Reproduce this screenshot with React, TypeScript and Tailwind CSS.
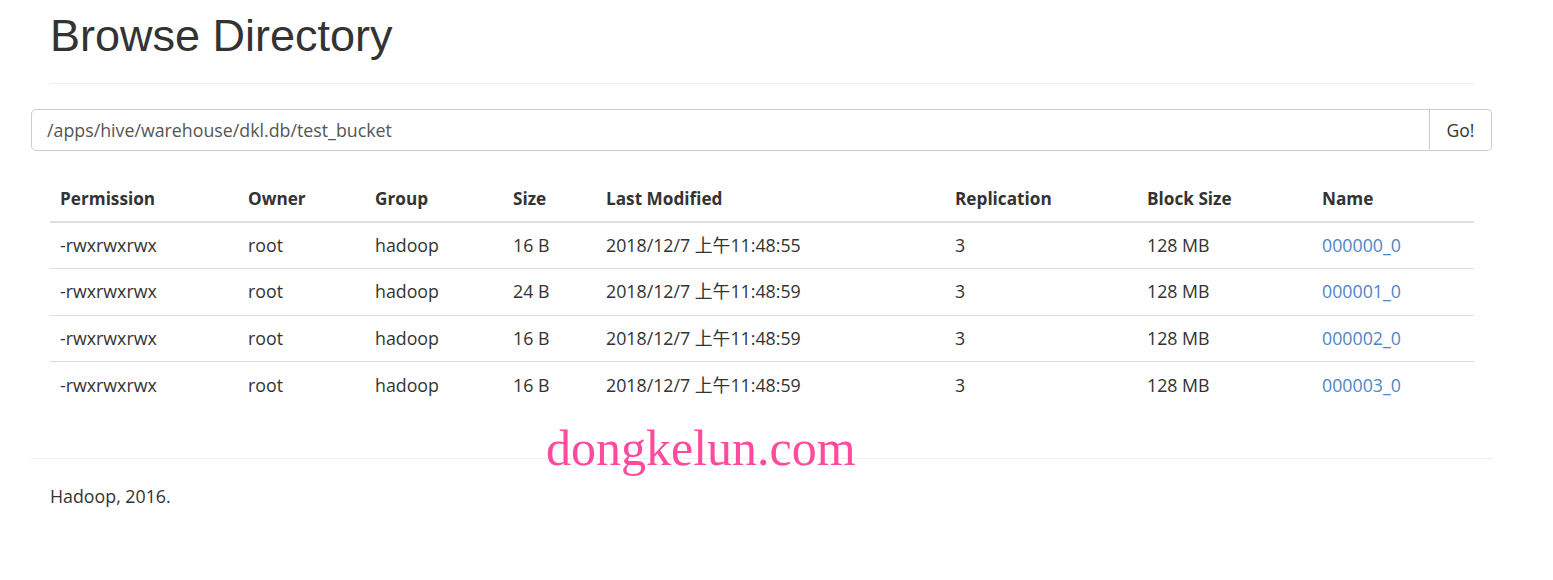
import React from "react";

const rows = [
  { perm: "-rwxrwxrwx", owner: "root", group: "hadoop", size: "16 B", mod: "2018/12/7 上午11:48:55", rep: "3", block: "128 MB", name: "000000_0" },
  { perm: "-rwxrwxrwx", owner: "root", group: "hadoop", size: "24 B", mod: "2018/12/7 上午11:48:59", rep: "3", block: "128 MB", name: "000001_0" },
  { perm: "-rwxrwxrwx", owner: "root", group: "hadoop", size: "16 B", mod: "2018/12/7 上午11:48:59", rep: "3", block: "128 MB", name: "000002_0" },
  { perm: "-rwxrwxrwx", owner: "root", group: "hadoop", size: "16 B", mod: "2018/12/7 上午11:48:59", rep: "3", block: "128 MB", name: "000003_0" },
];

const headers = ["Permission", "Owner", "Group", "Size", "Last Modified", "Replication", "Block Size", "Name"];

export default function App() {
  return (
    <div
      className="relative w-[1553px] h-[580px] bg-white text-[#333] overflow-hidden"
      style={{ fontFamily: '"Open Sans", "Noto Sans CJK SC", sans-serif' }}
    >
      <div className="pl-[31px] w-[1492px]">
        <div className="px-[19px]">
          <h1
            className="pt-[11px] h-[61px] text-[45px] leading-[50px] font-normal text-[#333]"
            style={{ fontFamily: '"Liberation Sans", Arial, sans-serif' }}
          >
            Browse Directory
          </h1>
          <div className="mt-[22px] border-t border-[#eee] w-[1424px]" />
        </div>

        <div className="mt-[25px] flex h-[42px] w-[1461px]">
          <div className="flex-1 flex items-center border border-[#ccc] rounded-l-[5px] px-[15px] text-[17.8px] text-[#555]">
            /apps/hive/warehouse/dkl.db/test_bucket
          </div>
          <div className="w-[62px] flex items-center justify-center border border-l-0 border-[#ccc] rounded-r-[5px] text-[17.5px] text-[#333] bg-white">
            Go!
          </div>
        </div>

        <div className="px-[19px] mt-[26px]">
          <table className="table-fixed border-collapse w-[1424px] text-[17.8px]">
            <colgroup>
              <col className="w-[188px]" />
              <col className="w-[127px]" />
              <col className="w-[138px]" />
              <col className="w-[93px]" />
              <col className="w-[349px]" />
              <col className="w-[192px]" />
              <col className="w-[175px]" />
              <col className="w-[162px]" />
            </colgroup>
            <thead>
              <tr className="border-b-2 border-[#ddd]">
                {headers.map((h) => (
                  <th key={h} className="h-[45px] px-[10px] text-left font-bold text-[17.2px] text-[#333] align-middle">
                    {h}
                  </th>
                ))}
              </tr>
            </thead>
            <tbody>
              {rows.map((r, i) => (
                <tr key={r.name} className={i > 0 ? "border-t border-[#ddd]" : ""}>
                  <td className="h-[46.5px] px-[10px] align-middle">{r.perm}</td>
                  <td className="px-[10px] align-middle">{r.owner}</td>
                  <td className="px-[10px] align-middle">{r.group}</td>
                  <td className="px-[10px] align-middle">{r.size}</td>
                  <td className="px-[10px] align-middle">{r.mod}</td>
                  <td className="px-[10px] align-middle">{r.rep}</td>
                  <td className="px-[10px] align-middle">{r.block}</td>
                  <td className="px-[10px] align-middle">
                    <a className="text-[#4f86c6]">{r.name}</a>
                  </td>
                </tr>
              ))}
            </tbody>
          </table>
        </div>

        <div className="mt-[50px] border-t border-[#eee] w-[1461px]" />
        <div className="px-[19px] mt-[25px] text-[17.8px] leading-[25px]">Hadoop, 2016.</div>
      </div>

      <div
        className="absolute left-[546px] top-[423px] text-[50px] leading-[50px] text-[#ff4a9e]"
        style={{ fontFamily: '"Liberation Serif", "Times New Roman", serif' }}
      >
        dongkelun.com
      </div>
    </div>
  );
}
